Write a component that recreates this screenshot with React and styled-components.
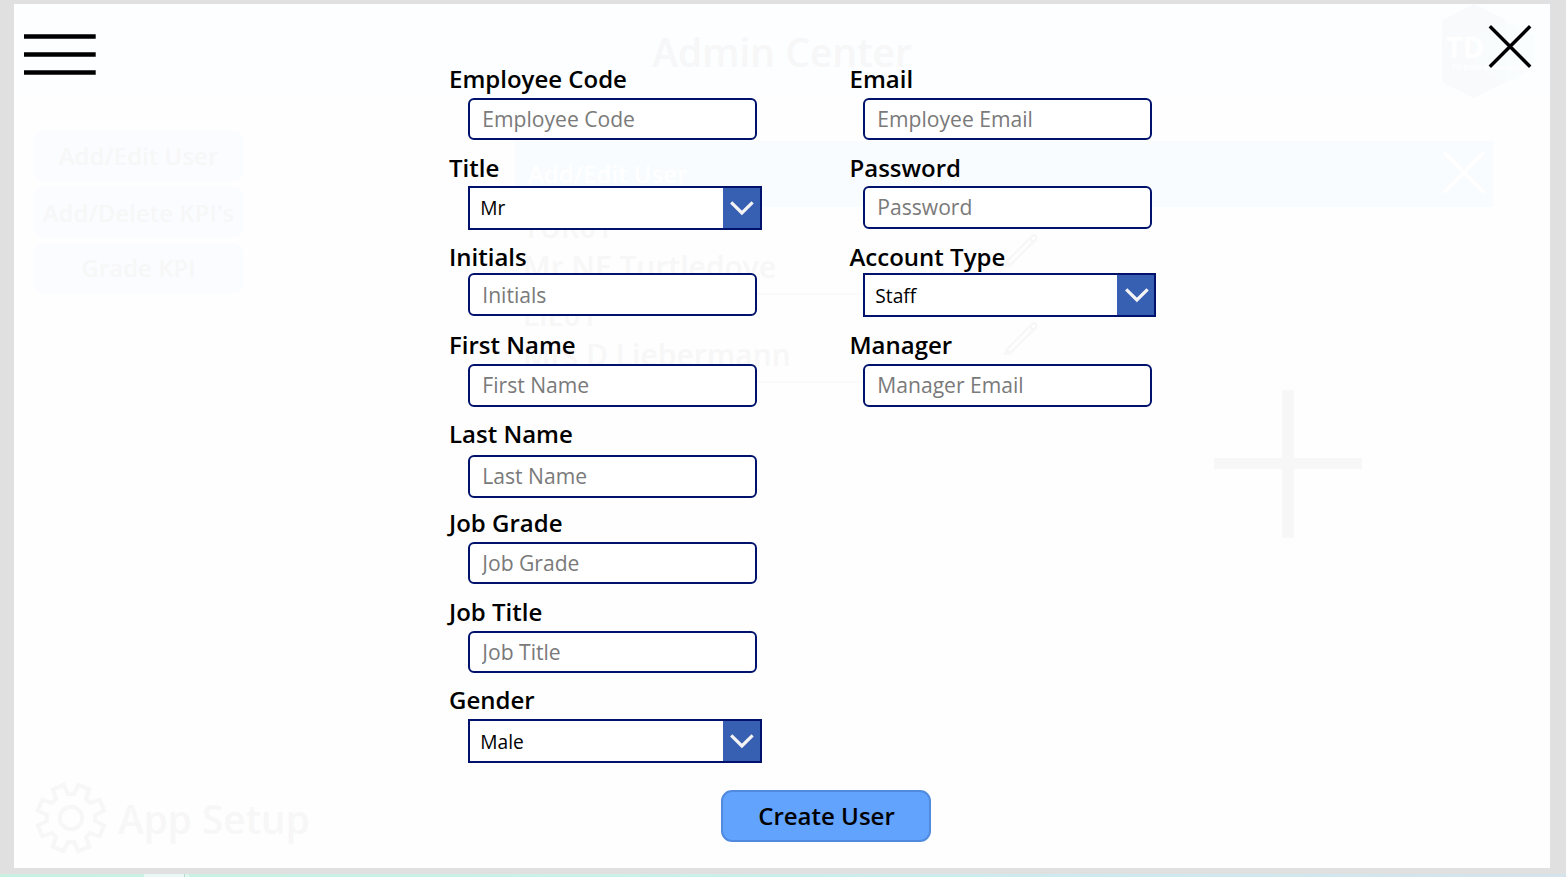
import React from "react";
import styled, { createGlobalStyle } from "styled-components";

const GlobalStyle = createGlobalStyle`
  * { box-sizing: border-box; }
  body { margin: 0; background: #e0e0e0; font-family: "Open Sans", "Noto Sans", sans-serif; overflow: hidden; }
  button, input { font-family: inherit; }
`;

const Page = styled.div`
  height: 877px;
  padding-top: 4px;
  display: flex;
  flex-direction: column;
  overflow: hidden;
`;

const Screen = styled.main`
  position: relative;
  flex: none;
  width: 1536px;
  height: 864px;
  margin: 0 16px 6px 14px;
  background: #fefefe;
  overflow: hidden;
`;

const Strip = styled.footer`
  display: flex;
  height: 3px;
  padding-left: 144px;
  background: linear-gradient(90deg, #c9f1e2 0%, #cbf0e8 40%, #cdeaf0 70%, #d5e3ec 100%);
`;

const StripTab = styled.div`
  width: 45px;
  background: linear-gradient(90deg, #eaf8f5 40px, #b5d8cf 40px, #b5d8cf 41px, #dcf5ee 41px);
`;

/* Dimmed page behind the form */
const Backdrop = styled.div`
  height: 100%;
  display: flex;
  flex-direction: column;
  color: #f7f7f7;
`;

const Header = styled.header`
  display: grid;
  grid-template-columns: 1fr auto 1fr;
  height: 94px;
  background: #fcfeff;
`;

const Heading = styled.h1`
  grid-column: 2;
  margin: 21px 0 0;
  font-size: 39px;
  line-height: 54px;
  font-weight: 600;
`;

const LogoBox = styled.div`
  justify-self: end;
  width: 94px;
  height: 94px;
  margin-right: 16px;
`;

const Columns = styled.div`
  flex: 1;
  display: flex;
`;

const SideNav = styled.nav`
  display: flex;
  flex-direction: column;
  width: 501px;
  padding: 32px 0 14px 19px;
`;

const NavButton = styled.div`
  display: flex;
  align-items: center;
  justify-content: center;
  width: 210px;
  height: ${(p) => p.$height}px;
  margin-bottom: ${(p) => p.$gap}px;
  padding-left: 1px;
  padding-bottom: ${(p) => p.$lift || 0}px;
  border-radius: 11px;
  background: #fbfcff;
  font-size: 24px;
  font-weight: 600;
`;

const Setup = styled.div`
  display: flex;
  align-items: center;
  gap: 11px;
  margin-top: auto;
  padding-left: 2px;
  font-size: 38.8px;
  line-height: 54px;
  font-weight: 600;
`;

const SetupLabel = styled.span`
  padding-top: 1px;
`;

const Panel = styled.section`
  width: 978px;
  padding-top: 43px;
`;

const PanelBar = styled.div`
  display: flex;
  align-items: center;
  justify-content: space-between;
  height: 66px;
  padding: 0 7px 2px 13px;
  background: #f8fcff;
  color: #fff;
  font-size: 24px;
  font-weight: 600;
`;

const PanelBody = styled.div`
  display: flex;
  justify-content: space-between;
`;

const UserList = styled.ul`
  width: 535px;
  margin: 0;
  padding: 0;
  list-style: none;
`;

const UserRow = styled.li`
  display: flex;
  align-items: center;
  justify-content: space-between;
  height: 88px;
  padding: 0 12px 0 8px;
  border-bottom: 2px solid #fafafa;
`;

const UserText = styled.div`
  padding-bottom: 4px;
`;

const UserCode = styled.div`
  font-size: 29px;
  line-height: 38px;
  font-weight: 600;
`;

const UserName = styled.div`
  font-size: 30px;
  line-height: 42px;
  font-weight: 600;
`;

const PlusBox = styled.div`
  width: 148px;
  height: 148px;
  margin: 183px 131px 0 0;
`;

/* Form layer above the dimmed page */
const Overlay = styled.div`
  position: absolute;
  inset: 0;
  display: flex;
  justify-content: space-between;
`;

const IconButton = styled.button`
  display: block;
  flex: none;
  height: ${(p) => p.$height}px;
  margin: ${(p) => p.$margin};
  padding: 0;
  border: 0;
  background: none;
`;

const Form = styled.form`
  display: flex;
  flex-direction: column;
  width: 708px;
  margin-top: 58px;
  margin-left: 353px;
  margin-right: auto;
`;

const FormColumns = styled.div`
  display: flex;
  height: 728px;
`;

const FormColumn = styled.div`
  width: ${(p) => p.$width}px;
  flex: none;
`;

const Field = styled.div`
  height: ${(p) => p.$height}px;
  display: flex;
  flex-direction: column;
`;

const Label = styled.label`
  flex: none;
  height: ${(p) => p.$height}px;
  font-size: 24px;
  line-height: 33px;
  font-weight: 600;
  color: #000;
  white-space: nowrap;
`;

const TextInput = styled.input`
  flex: none;
  width: 289px;
  height: ${(p) => p.$height}px;
  margin: 0 0 0 ${(p) => p.$indent}px;
  padding: 0 12px ${(p) => p.$lift}px 12.3px;
  border: 2px solid #00126b;
  border-radius: 6px;
  background: #fff;
  font-size: 21.1px;
  &::placeholder { color: #7a7a7a; opacity: 1; }
`;

const Select = styled.div`
  flex: none;
  display: flex;
  justify-content: space-between;
  width: ${(p) => p.$width}px;
  height: 44px;
  margin-left: ${(p) => p.$indent}px;
  border: 2px solid #00126b;
  background: #fff;
  color: #000;
  font-size: 19.2px;
  line-height: ${(p) => p.$line}px;
`;

const SelectValue = styled.span`
  padding-left: 10.3px;
`;

const SelectArrow = styled.span`
  display: flex;
  width: 37px;
  height: 40px;
  padding-left: ${(p) => p.$shift || 0}px;
  background: #3860b2;
  overflow: hidden;
  svg { flex: none; }
`;

const Submit = styled.button`
  width: 210px;
  height: 52px;
  margin-left: 272px;
  padding: 0 0 2px 1px;
  border: 2px solid #508be0;
  border-radius: 11px;
  background: #62a3fd;
  color: #000;
  font-size: 24px;
  font-weight: 600;
`;

const leftFields = [
  { label: "Employee Code", hint: "Employee Code", row: 89, offset: 36, height: 42, lift: 1 },
  { label: "Title", value: "Mr", row: 89, offset: 35, line: 39 },
  { label: "Initials", hint: "Initials", row: 88, offset: 33, height: 43, lift: 1 },
  { label: "First Name", hint: "First Name", row: 89, offset: 36, height: 43, lift: 3 },
  { label: "Last Name", hint: "Last Name", row: 89, offset: 38, height: 43, lift: 3 },
  { label: "Job Grade", hint: "Job Grade", row: 89, offset: 36, height: 42, lift: 1 },
  { label: "Job Title", hint: "Job Title", row: 88, offset: 36, height: 42, lift: 1 },
  { label: "Gender", value: "Male", row: 89, offset: 36, line: 41 },
];

const rightFields = [
  { label: "Email", hint: "Employee Email", row: 89, offset: 36, height: 42, lift: 1 },
  { label: "Password", hint: "Password", row: 89, offset: 35, height: 43, lift: 3 },
  { label: "Account Type", value: "Staff", row: 88, offset: 33, line: 41, shift: 1 },
  { label: "Manager", hint: "Manager Email", row: 89, offset: 36, height: 43, lift: 3 },
];

const users = [
  { code: "TUR01", name: "Mr NE Turtledove" },
  { code: "LIE01", name: "Mrs D Liebermann" },
];

function Cross({ color, width }) {
  return (
    <svg width="44" height="44" viewBox="0 0 44 44" fill="none" stroke={color} strokeWidth={width} display="block">
      <path d="M1.8 1.3 42.2 41.7M42.2 1.3 1.8 41.7" />
    </svg>
  );
}

function Pencil() {
  return (
    <svg width="34" height="34" viewBox="0 0 34 34" fill="none" stroke="#f7f7f7" strokeWidth="2.2">
      <path d="M1.5 33 2.2 29 28 3Q30 1.2 31.8 3T31.8 6.6L6 32.4ZM25.6 5.4 29.4 9.2M2.2 29 6 32.4" />
    </svg>
  );
}

function gearPath() {
  const pts = [];
  const corners = [
    [-7, 24.3],
    [7, 24.3],
    [12.5, 34],
    [32.5, 34],
  ];
  for (let i = 0; i < 8; i++) {
    corners.forEach(([deg, r]) => {
      const a = ((i * 45 - 90 + deg) * Math.PI) / 180;
      pts.push(`${(36 + r * Math.cos(a)).toFixed(2)} ${(36 + r * Math.sin(a)).toFixed(2)}`);
    });
  }
  return `M${pts.join("L")}Z`;
}

function Gear() {
  return (
    <svg width="72" height="72" viewBox="0 0 72 72" fill="none" stroke="#f7f7f7" strokeWidth="4">
      <path d={gearPath()} />
      <circle cx="36" cy="36" r="11.2" />
    </svg>
  );
}

function Logo() {
  return (
    <svg width="94" height="94" viewBox="0 0 94 94" display="block">
      <path d="M2 16 34 0 66 16V78L34 94 2 78Z" fill="#f9fafb" />
      <path d="M66 18 94 32V64L66 78 34 62V32Z" fill="#f9fcfe" opacity=".8" />
      <text x="6" y="54" fontSize="29" fontWeight="700" fill="#fff">TD</text>
      <text x="12" y="66" fontSize="7.5" fontWeight="700" fill="#fff">TD Data &amp; Analytics</text>
    </svg>
  );
}

function FormField({ field, indent, selectWidth }) {
  return (
    <Field $height={field.row}>
      <Label $height={field.offset}>{field.label}</Label>
      {field.value ? (
        <Select $indent={indent} $width={selectWidth} $line={field.line}>
          <SelectValue>{field.value}</SelectValue>
          <SelectArrow $shift={field.shift}>
            <svg width="37" height="40" viewBox="0 0 37 40" fill="none" stroke="#f4f4f4" strokeWidth="3.2">
              <path d="M8.2 14.3 18.9 25 29.6 14.3" />
            </svg>
          </SelectArrow>
        </Select>
      ) : (
        <TextInput $indent={indent} $height={field.height} $lift={field.lift} placeholder={field.hint} />
      )}
    </Field>
  );
}

export default function App() {
  return (
    <Page>
      <GlobalStyle />
      <Screen>
        <Backdrop>
          <Header>
            <Heading>Admin Center</Heading>
            <LogoBox><Logo /></LogoBox>
          </Header>
          <Columns>
            <SideNav>
              <NavButton $height={52} $gap={4} $lift={2}>Add/Edit User</NavButton>
              <NavButton $height={52} $gap={5}>Add/Delete KPI's</NavButton>
              <NavButton $height={51} $gap={0} $lift={2}>Grade KPI</NavButton>
              <Setup><Gear /><SetupLabel>App Setup</SetupLabel></Setup>
            </SideNav>
            <Panel>
              <PanelBar>Add/Edit User<Cross color="#fff" width={3.4} /></PanelBar>
              <PanelBody>
                <UserList>
                  {users.map((u) => (
                    <UserRow key={u.code}>
                      <UserText>
                        <UserCode>{u.code}</UserCode>
                        <UserName>{u.name}</UserName>
                      </UserText>
                      <Pencil />
                    </UserRow>
                  ))}
                </UserList>
                <PlusBox>
                  <svg width="148" height="148" viewBox="0 0 148 148" fill="#f7f7f7" display="block">
                    <path d="M68 0H80V68H148V79H80V148H68V79H0V68H68Z" />
                  </svg>
                </PlusBox>
              </PanelBody>
            </Panel>
          </Columns>
        </Backdrop>
        <Overlay>
          <IconButton $height={41} $margin="30px 0 0 10px" aria-label="Menu">
            <svg width="72" height="41" viewBox="0 0 72 41" stroke="#000" strokeWidth="4.4" display="block">
              <path d="M0 2.5H71.7M0 20.5H71.7M0 38.5H71.7" />
            </svg>
          </IconButton>
          <Form>
            <FormColumns>
              <FormColumn $width={400.5}>
                {leftFields.map((f) => <FormField key={f.label} field={f} indent={19} selectWidth={294} />)}
              </FormColumn>
              <FormColumn $width={307}>
                {rightFields.map((f) => <FormField key={f.label} field={f} indent={13.5} selectWidth={293} />)}
              </FormColumn>
            </FormColumns>
            <Submit type="button">Create User</Submit>
          </Form>
          <IconButton $height={44} $margin="21px 18px 0 0" aria-label="Close">
            <Cross color="#000" width={3.4} />
          </IconButton>
        </Overlay>
      </Screen>
      <Strip><StripTab /></Strip>
    </Page>
  );
}
